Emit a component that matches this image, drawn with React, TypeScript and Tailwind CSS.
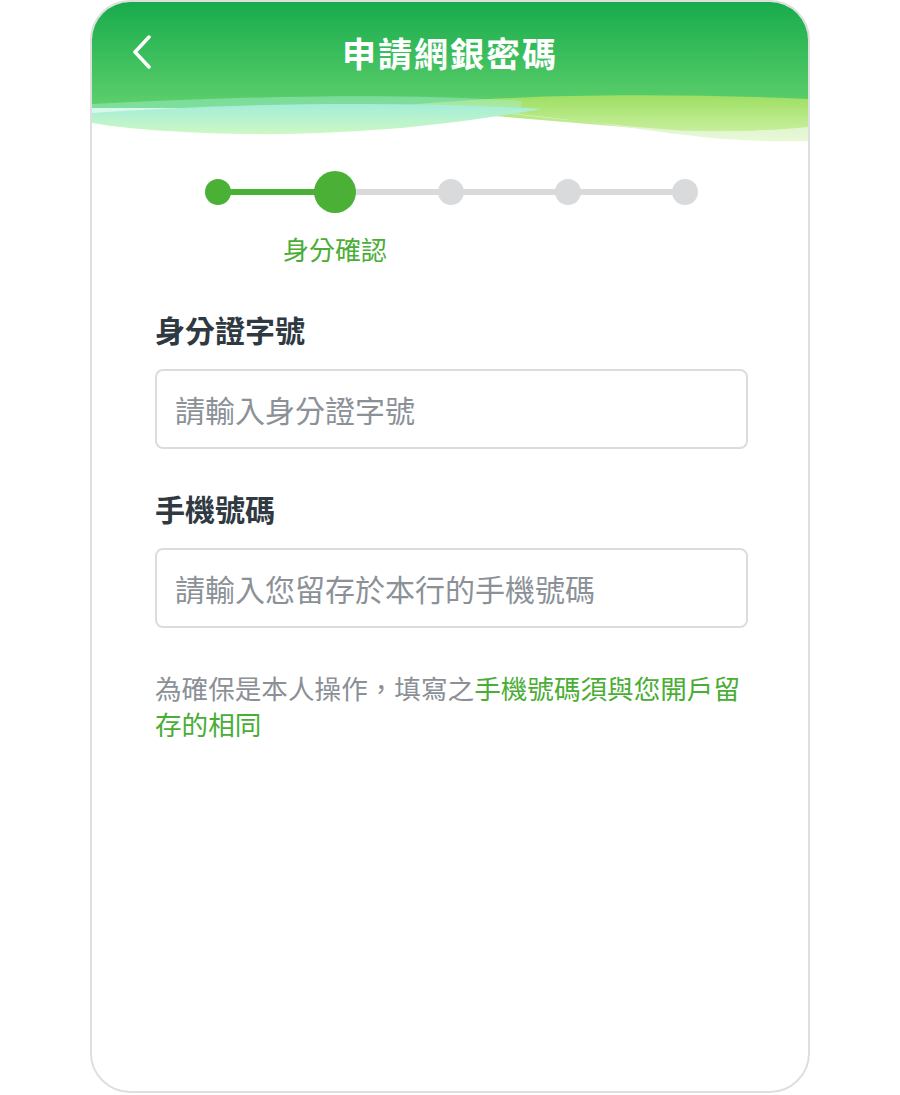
import React from 'react';

// 申請網銀密碼 — 步驟一：身分確認

const FONT = { fontFamily: '"Noto Sans CJK TC", "Noto Sans", sans-serif' };

const STEPS = 5;
const CURRENT = 1; // 0-based: 第二個點是目前步驟

function HeaderWaves() {
  return (
    <svg className="absolute inset-0 h-full w-full" viewBox="0 0 716 142" preserveAspectRatio="none">
      <defs>
        <linearGradient id="hg" x1="0" y1="0" x2="0" y2="1">
          <stop offset="0" stopColor="#17ab4c" />
          <stop offset="1" stopColor="#5fd06c" />
        </linearGradient>
        <linearGradient id="yg" x1="0" y1="0" x2="0" y2="1">
          <stop offset="0" stopColor="#9ddf62" />
          <stop offset="1" stopColor="#c9ef9e" />
        </linearGradient>
        <linearGradient id="mg" x1="0" y1="0" x2="0" y2="1">
          <stop offset="0" stopColor="#a3edd8" />
          <stop offset="1" stopColor="#cdf8c3" />
        </linearGradient>
        <linearGradient id="pg" x1="0" y1="0" x2="0" y2="1">
          <stop offset="0" stopColor="#d3efc5" />
          <stop offset="1" stopColor="#e9f9d8" />
        </linearGradient>
      </defs>
      <rect x="0" y="0" width="716" height="106" fill="url(#hg)" />
      {/* 右側黃綠波 */}
      <path d="M290 106 C 400 93, 550 90, 716 97 L 716 126 C 660 130, 610 131, 570 128 C 480 121, 390 112, 290 106 Z" fill="url(#yg)" />
      {/* 右側淡色波 */}
      <path d="M340 106 C 450 111, 540 127, 610 135 C 650 139, 690 140, 716 139 L 716 125 C 680 129, 630 131, 580 128 C 500 122, 420 110, 340 106 Z" fill="url(#pg)" />
      {/* 左側半透明青綠帶 */}
      <path d="M0 102 C 140 95, 300 90, 430 99 L 428 112 C 300 106, 150 108, 0 114 Z" fill="#a6f0d8" opacity="0.45" />
      {/* 左側薄荷波 */}
      <path d="M0 111 C 130 102, 300 98, 450 107 C 380 119, 300 130, 195 132 C 115 133, 40 128, 0 121 Z" fill="url(#mg)" />
    </svg>
  );
}

function Stepper() {
  return (
    <div className="mx-auto w-[583px]">
      <div className="relative grid grid-cols-5 items-center h-[42px]">
        <div className="absolute left-[58px] right-[58px] top-1/2 h-[6px] -translate-y-1/2 bg-[#d9dadc]" />
        <div className="absolute left-[58px] w-[117px] top-1/2 h-[6px] -translate-y-1/2 bg-[#4bb036]" />
        {Array.from({ length: STEPS }).map((_, i) => (
          <div key={i} className="relative flex justify-center">
            {i === CURRENT ? (
              <span className="h-[42px] w-[42px] rounded-full bg-[#4bb036]" />
            ) : (
              <span className={`h-[26px] w-[26px] rounded-full ${i < CURRENT ? 'bg-[#4bb036]' : 'bg-[#d9dadc]'}`} />
            )}
          </div>
        ))}
      </div>
      <div className="grid grid-cols-5 mt-[18px]">
        <div />
        <div className="flex justify-center">
          <span className="whitespace-nowrap text-[26px] leading-[36px] text-[#4aad35]">身分確認</span>
        </div>
      </div>
    </div>
  );
}

function Field({ label, placeholder }: { label: string; placeholder: string }) {
  return (
    <div>
      <div className="text-[30px] leading-[42px] font-semibold text-[#2f3942]">{label}</div>
      <input
        className="mt-[19px] block h-[80px] w-full rounded-[8px] border-2 border-[#dadde0] bg-white px-[18px] text-[30px] text-[#2f3942] outline-none placeholder:text-[#8b9197]"
        style={FONT}
        placeholder={placeholder}
      />
    </div>
  );
}

export default function App() {
  return (
    <div className="min-h-[1095px] w-full bg-white" style={FONT}>
      <div className="mx-auto h-[1093px] w-[720px] overflow-hidden rounded-[40px] border-2 border-[#dedede] bg-white">
        <div className="relative h-[142px]">
          <HeaderWaves />
          <div className="relative grid h-[100px] grid-cols-[1fr_auto_1fr] items-center">
            <div className="pl-[40px]">
              <svg width="20" height="34" viewBox="0 0 20 34">
                <path d="M17 2 L3 17 L17 32" fill="none" stroke="#ffffff" strokeWidth="3.5" strokeLinecap="round" strokeLinejoin="round" />
              </svg>
            </div>
            <h1 className="text-[34px] font-bold tracking-[2px] text-white">申請網銀密碼</h1>
            <div />
          </div>
        </div>

        <div className="pl-[63px] pr-[60px] pt-[27px]">
          <Stepper />

          <div className="mt-[41px] flex flex-col gap-[38px]">
            <Field label="身分證字號" placeholder="請輸入身分證字號" />
            <Field label="手機號碼" placeholder="請輸入您留存於本行的手機號碼" />
          </div>

          <p className="mt-[42px] text-[26.6px] leading-[36px] text-[#8a9096]">
            為確保是本人操作，填寫之
            <span className="text-[#4aad35]">手機號碼須與您開戶留存的相同</span>
          </p>
        </div>
      </div>
    </div>
  );
}
